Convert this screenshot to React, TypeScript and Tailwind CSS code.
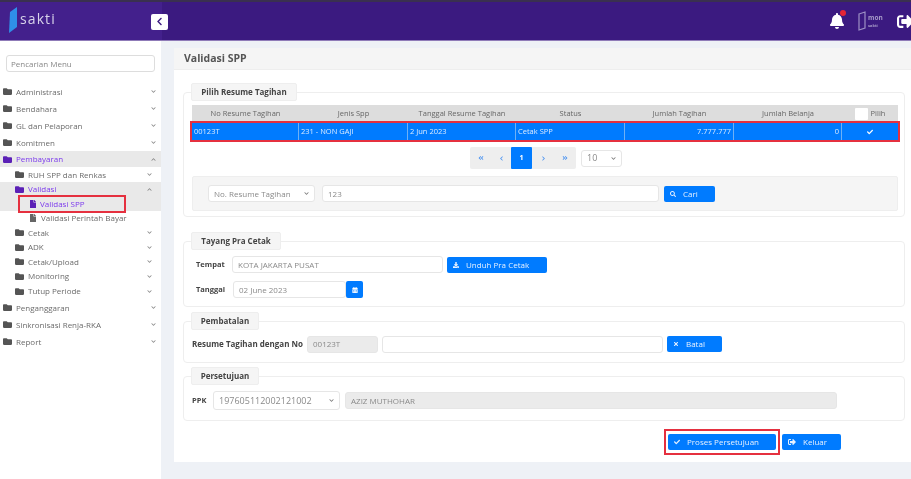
import React from 'react';
import { FaBell, FaCheck, FaChevronDown, FaChevronLeft, FaChevronRight, FaChevronUp, FaAngleDoubleLeft, FaAngleDoubleRight, FaDownload, FaFile, FaFolder, FaSearch, FaSignOutAlt, FaTimes, FaCalendarAlt } from 'react-icons/fa';

type MenuItem = {
  label: string;
  level: 0 | 1 | 2;
  h: string;
  active?: boolean;
  open?: boolean;
  leaf?: boolean;
  marked?: boolean;
};

const MENU: MenuItem[] = [
  { label: 'Administrasi', level: 0, h: 'h-[17px]' },
  { label: 'Bendahara', level: 0, h: 'h-[17px]' },
  { label: 'GL dan Pelaporan', level: 0, h: 'h-[17px]' },
  { label: 'Komitmen', level: 0, h: 'h-[17px]' },
  { label: 'Pembayaran', level: 0, h: 'h-[16px]', active: true, open: true },
  { label: 'RUH SPP dan Renkas', level: 1, h: 'h-[15px]' },
  { label: 'Validasi', level: 1, h: 'h-[14px]', active: true, open: true },
  { label: 'Validasi SPP', level: 2, h: 'h-[15px]', active: true, leaf: true, marked: true },
  { label: 'Validasi Perintah Bayar', level: 2, h: 'h-[14px]', leaf: true },
  { label: 'Cetak', level: 1, h: 'h-[15px]' },
  { label: 'ADK', level: 1, h: 'h-[14px]' },
  { label: 'Cetak/Upload', level: 1, h: 'h-[15px]' },
  { label: 'Monitoring', level: 1, h: 'h-[14px]' },
  { label: 'Tutup Periode', level: 1, h: 'h-[16px]' },
  { label: 'Penganggaran', level: 0, h: 'h-[17px]' },
  { label: 'Sinkronisasi Renja-RKA', level: 0, h: 'h-[17px]' },
  { label: 'Report', level: 0, h: 'h-[17px]' },
];

const COLUMNS = [
  { title: 'No Resume Tagihan', value: '00123T', w: 'w-[107px]', right: false },
  { title: 'Jenis Spp', value: '231 - NON GAJI', w: 'w-[109px]', right: false },
  { title: 'Tanggal Resume Tagihan', value: '2 Jun 2023', w: 'w-[108px]', right: false },
  { title: 'Status', value: 'Cetak SPP', w: 'w-[109px]', right: false },
  { title: 'Jumlah Tagihan', value: '7.777.777', w: 'w-[109px]', right: true },
  { title: 'Jumlah Belanja', value: '0', w: 'w-[108px]', right: true },
];

function MenuRow({ item }: { item: MenuItem }) {
  const pad = item.level === 0 ? 'pl-[3px]' : item.level === 1 ? 'pl-[15px]' : 'pl-[29px]';
  const bg = item.active ? 'bg-[#e9e9e9]' : '';
  return (
    <div className={`flex items-center ${item.h} ${pad} ${bg} pr-[5px]`}>
      <div className={`flex items-center gap-[4px] ${item.marked ? 'outline-2 outline-[#e5303f] -ml-[9px] pl-[9px] w-[104px] h-[14px]' : ''}`}>
        {item.leaf ? (
          <FaFile className={`text-[8px] shrink-0 ${item.active ? 'text-[#5b21b6]' : 'text-[#666666]'}`} />
        ) : (
          <FaFolder className={`text-[9px] shrink-0 ${item.active ? 'text-[#5b21b6]' : 'text-[#555555]'}`} />
        )}
        <span className={`text-[8px] ${item.marked ? '-ml-[1px]' : ''} ${item.active ? 'text-[#7c3aed]' : 'text-[#6b6b6b]'}`}>{item.label}</span>
      </div>
      {!item.leaf && (
        <span className={`ml-auto ${item.level === 1 ? 'mr-[4px]' : 'mr-0'} text-[#888888]`}>
          {item.open ? <FaChevronUp className="text-[5px]" /> : <FaChevronDown className="text-[5px]" />}
        </span>
      )}
    </div>
  );
}

function Section({ title, legendW, className, children }: { title: string; legendW: string; className: string; children: React.ReactNode }) {
  return (
    <fieldset className={`border border-[#eeeeee] rounded-[4px] ${className}`}>
      <legend className={`ml-[7px] ${legendW} h-[18px] flex items-center justify-center bg-[#f5f5f5] border border-[#eeeeee] rounded-[2px] text-[8px] font-bold text-[#444444]`}>{title}</legend>
      {children}
    </fieldset>
  );
}

function BlueButton({ icon, label, className }: { icon: React.ReactNode; label: string; className: string }) {
  return (
    <button className={`flex items-center gap-[7px] bg-[#007bff] text-[#e6f1ff] text-[8px] rounded-[2px] h-[16px] ${className}`}>
      {icon}
      {label}
    </button>
  );
}

const field = 'h-[17px] bg-white border border-[#e6e6e6] rounded-[3px] flex items-center px-[5px] text-[8px] text-[#8a8a8a]';

export default function App() {
  return (
    <div className="w-[911px] h-[479px] overflow-hidden flex flex-col bg-[#eef1f6] blur-[0.7px]" style={{ fontFamily: '"Open Sans", sans-serif' }}>
      {/* top bar */}
      <header className="h-[41px] shrink-0 flex bg-[#3b1a80] border-b border-[#8f7bb8] border-t-2 border-t-[#3a3050]">
        <div className="w-[162px] flex items-center pl-[8px] bg-[#43208c]">
          <svg width="10" height="26" viewBox="0 0 10 26" className="-mt-[2px]">
            <path d="M2 5 L9 0 V20 L1 26 Z" fill="#2f8fe8" />
          </svg>
          <span className="ml-[2px] -mt-[6px] text-[14px] tracking-[1.1px] text-[#d8d3ea]">sakti</span>
          <div className="ml-auto -mr-[6px] mt-[1px] w-[17px] h-[16px] bg-white rounded-[2px] flex items-center justify-center">
            <FaChevronLeft className="text-[9px] text-[#3b1a80]" />
          </div>
        </div>
        <div className="flex-1 flex items-center justify-end -mr-[3px]">
          <span className="relative mr-[12px]">
            <FaBell className="text-[16px] text-white" />
            <span className="absolute -top-[3px] -right-[1px] w-[6px] h-[6px] rounded-full bg-[#e52535]" />
          </span>
          <svg width="10" height="20" viewBox="0 0 10 20" fill="none" stroke="#9d90c4" strokeWidth="1.2">
            <path d="M2 3 L8 1 V17 L2 19 Z" />
          </svg>
          <span className="w-[20px] mr-[9px] ml-[1px] text-[6.5px] leading-[7px] font-bold text-[#a89cc9]">
            mon
            <br />
            <span className="text-[4px]">sakti</span>
          </span>
          <FaSignOutAlt className="text-[17px] text-white" />
        </div>
      </header>

      <div className="flex-1 flex min-h-0">
        {/* sidebar */}
        <aside className="w-[161px] shrink-0 bg-white pt-[14px]">
          <div className="mx-[6px] h-[17px] border border-[#dddddd] rounded-[3px] flex items-center px-[4px] text-[8px] text-[#888888]">Pencarian Menu</div>
          <nav className="mt-[11px]">
            {MENU.map(item => (
              <MenuRow key={item.label} item={item} />
            ))}
          </nav>
        </aside>

        {/* content */}
        <main className="flex-1 pt-[7px] pl-[13px] pb-[17px] min-w-0">
          <section className="h-full bg-white flex flex-col">
            <div className="h-[22px] shrink-0 bg-[#f5f5f5] border-b border-[#eeeeee] flex items-center pl-[10px] text-[10.5px] font-bold text-[#555555]">Validasi SPP</div>
            <div className="pl-[9px] pr-[6px] pt-[13px] flex flex-col">
              <Section title="Pilih Resume Tagihan" legendW="w-[106px]" className="h-[134px]">
                <div className="mt-[4px] ml-[8px] w-[706px]">
                  <div className="flex h-[18px] items-center bg-[#dddddd] text-[7.5px] text-[#666666]">
                    {COLUMNS.map(c => (
                      <div key={c.title} className={`${c.w} text-center`}>{c.title}</div>
                    ))}
                    <div className="flex-1 flex items-center justify-center gap-[3px]">
                      <span className="w-[13px] h-[12px] bg-white rounded-[1px]" />
                      Pilih
                    </div>
                  </div>
                  <div className="flex h-[17px] items-center bg-[#007bff] outline-2 outline-[#e5303f] text-[7.5px] text-[#dcebff]">
                    {COLUMNS.map(c => (
                      <div key={c.title} className={`${c.w} h-full flex items-center px-[2px] border-r border-[#6fb0f5] ${c.right ? 'justify-end' : ''}`}>{c.value}</div>
                    ))}
                    <div className="flex-1 flex justify-center"><FaCheck className="text-[6px] text-white" /></div>
                  </div>
                  <div className="mt-[7px] flex items-center pl-[278px] h-[22px]">
                    <div className="flex h-[22px] items-center bg-[#eeeeee] rounded-[2px] text-[#4d94f0]">
                      <span className="w-[21px] flex justify-center"><FaAngleDoubleLeft className="text-[6px]" /></span>
                      <span className="w-[20px] flex justify-center"><FaChevronLeft className="text-[5px]" /></span>
                      <span className="w-[21px] h-[22px] bg-[#007bff] rounded-[1px] flex items-center justify-center text-[7px] font-bold text-white">1</span>
                      <span className="w-[22px] flex justify-center"><FaChevronRight className="text-[5px]" /></span>
                      <span className="w-[22px] flex justify-center"><FaAngleDoubleRight className="text-[6px]" /></span>
                    </div>
                    <div className={`${field} ml-[5px] w-[41px] justify-between !text-[9px]`}>10<FaChevronDown className="text-[5px] text-[#777777]" /></div>
                  </div>
                  <div className="mt-[7px] h-[35px] bg-[#f5f5f5] border border-[#eeeeee] rounded-[2px] flex items-center pl-[15px] gap-[7px]">
                    <div className={`${field} w-[107px] justify-between whitespace-nowrap`}>No. Resume Tagihan<FaChevronDown className="text-[5px] text-[#777777]" /></div>
                    <div className={`${field} w-[337px]`}>123</div>
                    <BlueButton icon={<FaSearch className="text-[6px]" />} label="Cari" className="-ml-[2px] w-[51px] pl-[6px]" />
                  </div>
                </div>
              </Section>

              <Section title="Tayang Pra Cetak" legendW="w-[90px]" className="mt-[15px] h-[75px]">
                <div className="mt-[6px] ml-[12px] flex items-center h-[17px]">
                  <span className="w-[36px] text-[7.5px] font-bold text-[#444444]">Tempat</span>
                  <div className={`${field} w-[211px]`}>KOTA JAKARTA PUSAT</div>
                  <BlueButton icon={<FaDownload className="text-[6px]" />} label="Unduh Pra Cetak" className="ml-[4px] w-[100px] pl-[6px]" />
                </div>
                <div className="mt-[8px] ml-[12px] flex items-center h-[17px]">
                  <span className="w-[37px] text-[7.5px] font-bold text-[#444444]">Tanggal</span>
                  <div className={`${field} w-[113px]`}>02 June 2023</div>
                  <span className="w-[17px] h-[17px] bg-[#007bff] rounded-[2px] flex items-center justify-center">
                    <FaCalendarAlt className="text-[6px] text-white" />
                  </span>
                </div>
              </Section>

              <Section title="Pembatalan" legendW="w-[68px]" className="mt-[5px] h-[51px]">
                <div className="mt-[6px] ml-[8px] flex items-center h-[16px]">
                  <span className="w-[115px] text-[8px] font-bold text-[#444444] whitespace-nowrap">Resume Tagihan dengan No</span>
                  <div className={`${field} !bg-[#ebebeb] w-[71px]`}>00123T</div>
                  <div className={`${field} ml-[4px] w-[281px]`} />
                  <BlueButton icon={<FaTimes className="text-[6px]" />} label="Batal" className="ml-[4px] w-[55px] pl-[6px]" />
                </div>
              </Section>

              <Section title="Persetujuan" legendW="w-[68px]" className="mt-[4px] h-[54px]">
                <div className="mt-[6px] ml-[8px] flex items-center h-[19px]">
                  <span className="w-[21px] text-[7.5px] font-bold text-[#444444]">PPK</span>
                  <div className={`${field} !h-[19px] w-[127px] justify-between !text-[9px]`}>197605112002121002<FaChevronDown className="text-[5px] text-[#777777]" /></div>
                  <div className={`${field} !h-[17px] !bg-[#ebebeb] ml-[5px] w-[492px]`}>AZIZ MUTHOHAR</div>
                </div>
              </Section>

              <div className="mt-[8px] flex items-center pl-[481px]">
                <div className="border-2 border-[#e5303f] px-[2px] py-[3px]">
                  <BlueButton icon={<FaCheck className="text-[6px]" />} label="Proses Persetujuan" className="w-[108px] pl-[6px]" />
                </div>
                <BlueButton icon={<FaSignOutAlt className="text-[8px]" />} label="Keluar" className="w-[59px] pl-[6px] ml-[2px]" />
              </div>
            </div>
          </section>
        </main>
      </div>
    </div>
  );
}
